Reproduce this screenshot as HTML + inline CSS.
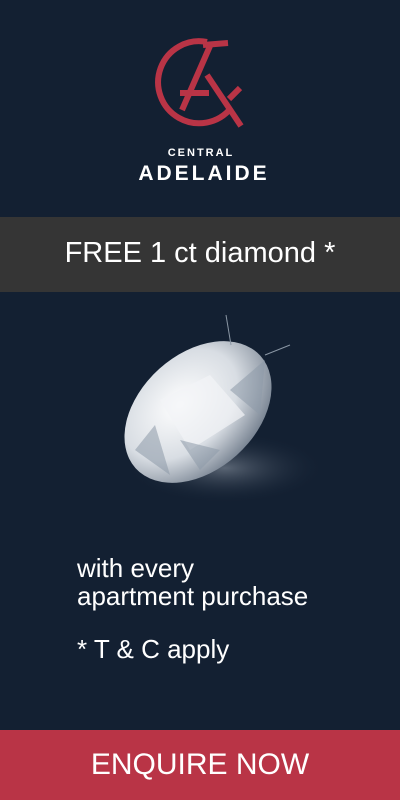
<!DOCTYPE html>
<html><head><style>
body{margin:0;width:400px;height:800px;background:#132032;position:relative;overflow:hidden;font-family:"Liberation Sans",sans-serif;color:#fff}
.t{position:absolute;left:0;width:400px;text-align:center}
</style></head><body>
<svg style="position:absolute;left:0;top:0" width="400" height="200">
<path d="M207 42 A41 41 0 1 0 231 108" fill="none" stroke="#b93446" stroke-width="6"/>
<path d="M203 45 L228 43" fill="none" stroke="#b93446" stroke-width="6"/>
<path d="M210 46 L182 110" fill="none" stroke="#b93446" stroke-width="6"/>
<path d="M207 75 L241 126" fill="none" stroke="#b93446" stroke-width="6"/>
<path d="M180 93 L209 93" fill="none" stroke="#b93446" stroke-width="6"/>
<path d="M229 99 L240 88" fill="none" stroke="#b93446" stroke-width="6"/>
<text x="201" y="156" text-anchor="middle" fill="#fff" font-family="Liberation Sans" font-weight="bold" font-size="11" letter-spacing="2">CENTRAL</text>
<text x="204" y="180" text-anchor="middle" fill="#fff" font-family="Liberation Sans" font-weight="bold" font-size="21" letter-spacing="3">ADELAIDE</text>
</svg>
<div style="position:absolute;top:217px;left:0;width:400px;height:75px;background:#353535"></div>
<div class="t" style="top:237px;font-size:29px">FREE 1 ct diamond *</div>
<svg style="position:absolute;left:100px;top:300px" width="220" height="210">
<defs><radialGradient id="g" cx="45%" cy="35%" r="65%"><stop offset="0" stop-color="#fff"/><stop offset=".6" stop-color="#d8dde3"/><stop offset="1" stop-color="#7d8896"/></radialGradient>
<radialGradient id="s"><stop offset="0" stop-color="#5a6574"/><stop offset="1" stop-color="#132032" stop-opacity="0"/></radialGradient></defs>
<ellipse cx="125" cy="168" rx="100" ry="36" fill="url(#s)"/>
<ellipse cx="98" cy="112" rx="84" ry="58" transform="rotate(-42 98 112)" fill="url(#g)"/>
<path d="M60 100 L110 75 L145 115 L90 150 Z" fill="#f2f4f6" opacity=".7"/>
<path d="M35 150 L70 175 L55 125Z M130 90 L165 60 L160 115Z M80 140 L120 150 L100 170Z" fill="#8d99a8" opacity=".55"/>
<line x1="126" y1="15" x2="131" y2="45" stroke="#8a96a4"/><line x1="165" y1="55" x2="190" y2="45" stroke="#8a96a4"/>
</svg>
<div style="position:absolute;left:77px;top:554px;font-size:26px;line-height:28px">with every<br>apartment purchase</div>
<div style="position:absolute;left:77px;top:634px;font-size:26px">* T &amp; C apply</div>
<div style="position:absolute;top:730px;left:0;width:400px;height:70px;background:#b93446"></div>
<div class="t" style="top:748px;font-size:30px">ENQUIRE NOW</div>
</body></html>
